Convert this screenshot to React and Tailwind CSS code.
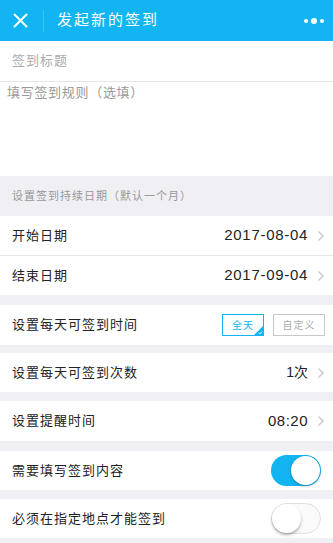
import React from 'react'

const cjk = { fontFamily: '"Liberation Sans", "Noto Sans CJK SC", sans-serif' }

function Chevron() {
  return (
    <svg width="8" height="12" viewBox="0 0 8 12" className="ml-[9px]">
      <path d="M1.5 1.5 L6 6 L1.5 10.5" fill="none" stroke="#c7c7cc" strokeWidth="1.4" />
    </svg>
  )
}

function Toggle({ on }) {
  if (on) {
    return (
      <div className="w-[50px] h-[31px] rounded-full bg-[#12b5f1] flex items-center justify-end pr-[1px]">
        <div className="w-[29px] h-[29px] rounded-full bg-white shadow-[0_1px_3px_rgba(0,0,0,0.3)]" />
      </div>
    )
  }
  return (
    <div className="w-[50px] h-[31px] rounded-full bg-[#fafafa] border border-[#e0e0e0] flex items-center">
      <div className="w-[29px] h-[29px] rounded-full bg-white shadow-[0_2px_3px_rgba(0,0,0,0.3)]" />
    </div>
  )
}

function Row({ label, children, h = 'h-[40px]', border }) {
  return (
    <div className={`${h} bg-white flex items-center justify-between pl-[12px] pr-[8px] ${border ? 'border-b border-[#e6e6e6]' : ''}`}>
      <span className="text-[13px] tracking-[1px] text-[#222]">{label}</span>
      <div className="flex items-center">{children}</div>
    </div>
  )
}

export default function App() {
  return (
    <div className="min-h-screen bg-[#efeff4]" style={cjk}>
      <header className="h-[41px] bg-[#12b5f1] flex items-center text-white">
        <div className="w-[40px] flex justify-center">
          <svg width="15" height="15" viewBox="0 0 15 15">
            <path d="M1.5 1.5 L13.5 13.5 M13.5 1.5 L1.5 13.5" stroke="white" strokeWidth="2" strokeLinecap="round" />
          </svg>
        </div>
        <div className="w-px h-[22px] bg-[#3cc2f4] ml-[3px]" />
        <h1 className="ml-[13px] text-[15px] tracking-[2px] font-normal">发起新的签到</h1>
        <div className="ml-auto mr-[9px] flex items-center gap-[3px]">
          <span className="w-[4px] h-[4px] rounded-full bg-white" />
          <span className="w-[6px] h-[6px] rounded-full bg-white" />
          <span className="w-[4px] h-[4px] rounded-full bg-white" />
        </div>
      </header>

      <div className="h-[41px] bg-white border-b border-[#e6e6e6] flex items-center pl-[12px]">
        <span className="text-[13px] tracking-[1px] text-[#aaa]">签到标题</span>
      </div>
      <div className="h-[94px] bg-white pl-[7px] pt-[2px] leading-[16px]">
        <span className="text-[13px] tracking-[0.7px] text-[#999]">填写签到规则（选填）</span>
      </div>

      <div className="h-[40px] flex items-center pl-[12px]">
        <span className="text-[11px] tracking-[1px] text-[#999]">设置签到持续日期（默认一个月）</span>
      </div>
      <Row label="开始日期" border>
        <span className="text-[15px] tracking-[0.7px] text-[#222]">2017-08-04</span>
        <Chevron />
      </Row>
      <Row label="结束日期" h="h-[39px]">
        <span className="text-[15px] tracking-[0.7px] text-[#222]">2017-09-04</span>
        <Chevron />
      </Row>

      <div className="h-[10px]" />
      <Row label="设置每天可签到时间">
        <div className="relative w-[42px] h-[22px] border border-[#12b5f1] flex items-center justify-center text-[10px] text-[#12b5f1] tracking-[1px]">
          全天
          <svg width="9" height="9" viewBox="0 0 9 9" className="absolute right-0 bottom-0">
            <path d="M9 0 L9 9 L0 9 Z" fill="#12b5f1" />
            <path d="M4.5 7 L6 8 L8 5.5" fill="none" stroke="white" strokeWidth="0.8" />
          </svg>
        </div>
        <div className="ml-[9px] w-[52px] h-[22px] border border-[#c8c8c8] flex items-center justify-center text-[10px] text-[#aaa] tracking-[1px]">
          自定义
        </div>
      </Row>

      <div className="h-[8px]" />
      <Row label="设置每天可签到次数" h="h-[39px]">
        <span className="text-[14px] text-[#222]">1次</span>
        <Chevron />
      </Row>

      <div className="h-[9px]" />
      <Row label="设置提醒时间">
        <span className="text-[15px] tracking-[0.5px] text-[#222]">08:20</span>
        <Chevron />
      </Row>

      <div className="h-[10px]" />
      <Row label="需要填写签到内容" h="h-[39px]">
        <div className="mr-[4px]"><Toggle on /></div>
      </Row>

      <div className="h-[9px]" />
      <Row label="必须在指定地点才能签到" h="h-[39px]">
        <div className="mr-[4px]"><Toggle /></div>
      </Row>
    </div>
  )
}
